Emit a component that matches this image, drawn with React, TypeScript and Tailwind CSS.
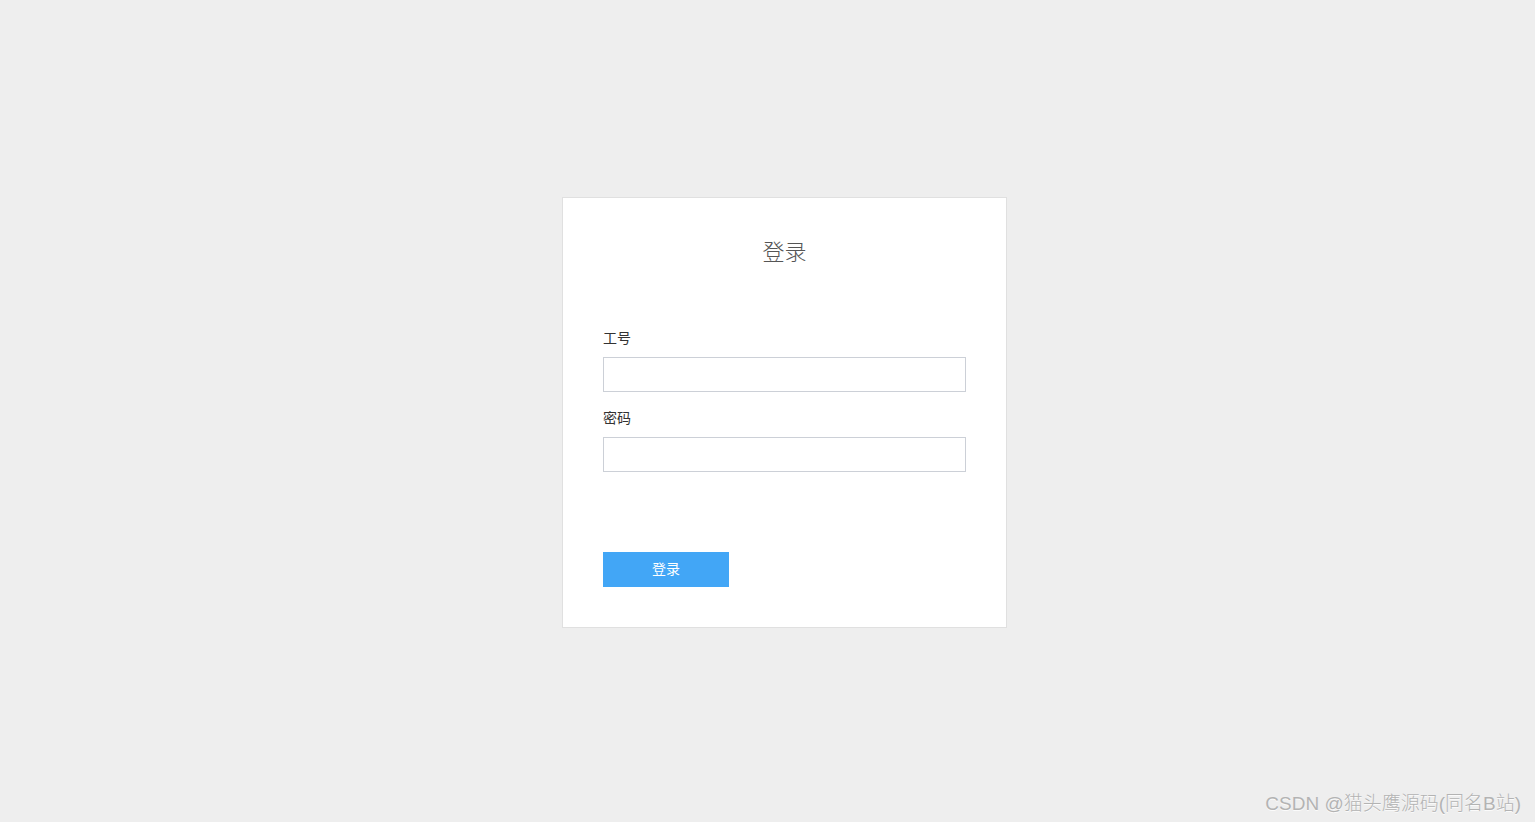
import React, { useState } from 'react'

const font = { fontFamily: '"Liberation Sans", "Noto Sans CJK SC", sans-serif' }

const Field = ({ label, type, value, onChange }: { label: string; type: string; value: string; onChange: (v: string) => void }) => (
  <div className="flex flex-col">
    <label className="text-[14px] leading-[20px] text-[#333] mb-[9px]">{label}</label>
    <input
      type={type}
      value={value}
      onChange={(e) => onChange(e.target.value)}
      className="h-[35px] w-full border border-[#ccd0d7] bg-white px-[10px] text-[14px] text-[#333] outline-none focus:border-[#42a5f5]"
    />
  </div>
)

export default function App() {
  const [account, setAccount] = useState('')
  const [password, setPassword] = useState('')

  return (
    <div className="relative min-h-[822px] w-full bg-[#eeeeee] flex items-center justify-center pl-[34px] pt-[2px]" style={font}>
      <div className="w-[445px] border border-[#e0e0e0] bg-white px-[40px] pt-[40px] pb-[40px]">
        <h1 className="text-center text-[22px] leading-[30px] text-[#555] font-light mb-[60px]">登录</h1>

        <div className="flex flex-col gap-[16px]">
          <Field label="工号" type="text" value={account} onChange={setAccount} />
          <Field label="密码" type="password" value={password} onChange={setPassword} />
        </div>

        <button className="mt-[80px] h-[35px] w-[126px] bg-[#42a6f6] text-[14px] text-white cursor-pointer hover:bg-[#2196f3]">
          登录
        </button>
      </div>

      <div className="absolute right-[14px] bottom-[6px] text-[19px] leading-[24px] font-light text-[#b3b3b3] [text-shadow:0_1px_0_rgba(255,255,255,0.8)]">
        CSDN @猫头鹰源码(同名B站)
      </div>
    </div>
  )
}
